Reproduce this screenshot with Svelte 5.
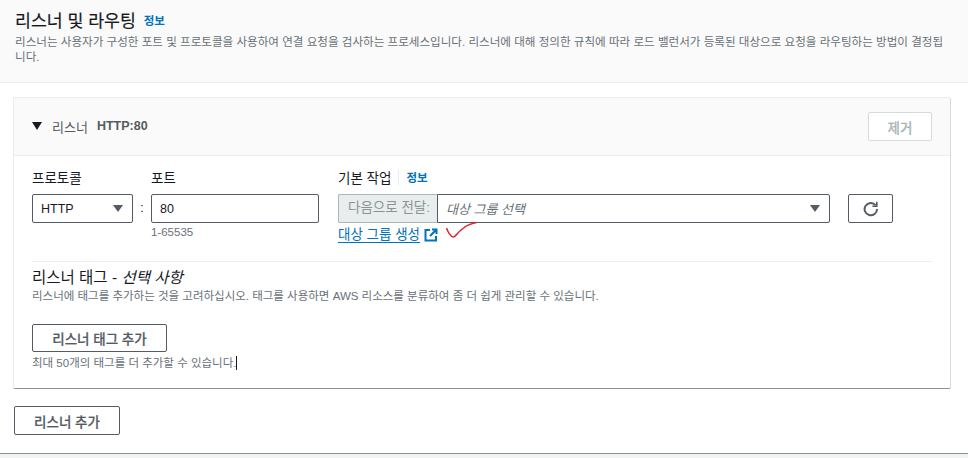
<script>
	const kr = '리스너';
</script>

<div class="page">
	<header class="intro">
		<h2>{kr} 및 라우팅 <a href="#info" class="info">정보</a></h2>
		<p>리스너는 사용자가 구성한 포트 및 프로토콜을 사용하여 연결 요청을 검사하는 프로세스입니다. 리스너에 대해 정의한 규칙에 따라 로드 밸런서가 등록된 대상으로 요청을 라우팅하는 방법이 결정됩니다.</p>
	</header>

	<section class="card">
		<div class="card-head">
			<div class="card-title">
				<span class="caret"></span>
				<span class="name">{kr}</span>
				<strong>HTTP:80</strong>
			</div>
			<button class="btn remove" disabled>제거</button>
		</div>

		<div class="card-body">
			<div class="form-row">
				<div class="field protocol">
					<span class="label">프로토콜</span>
					<div class="control select">HTTP<span class="arrow"></span></div>
				</div>
				<span class="colon">:</span>
				<div class="field port">
					<span class="label">포트</span>
					<div class="control">80</div>
					<span class="hint">1-65535</span>
				</div>
				<div class="field action">
					<span class="label">기본 작업<span class="sep"></span><a href="#info" class="info">정보</a></span>
					<div class="joined">
						<span class="addon">다음으로 전달:</span>
						<div class="control select target"><em>대상 그룹 선택</em><span class="arrow"></span></div>
					</div>
					<div class="link-row">
						<a href="#create" class="create">대상 그룹 생성</a>
						<svg class="ext" width="14" height="14" viewBox="0 0 14 14" fill="none" stroke="#0073bb" stroke-width="2">
							<path d="M6 2H1.5v10.5H12V8" />
							<path d="M8 1.5h4.5V6M12.500 1.500 6 8" />
						</svg>
						<svg class="check" width="32" height="16" viewBox="0 0 32 16" fill="none" stroke="#e0202a" stroke-width="1.5">
							<path d="M0.5 6c1 3 4 9 7 9 1.500 0 4-4 7-6.500 2-2 3-2 5-4 3-2 6-3 11-4" />
						</svg>
					</div>
				</div>
				<button class="btn refresh" aria-label="새로 고침">
					<svg width="16" height="16" viewBox="0 0 16 16" fill="none" stroke="#545b64" stroke-width="2">
						<path d="M12.6 4.2A6.2 6.2 0 1 0 14 8" />
						<path d="M13.8 .8v4.400H9.400" stroke-width="1.6" />
					</svg>
				</button>
			</div>

			<div class="tags">
				<h3>{kr} 태그 - <em>선택 사항</em></h3>
				<p>리스너에 태그를 추가하는 것을 고려하십시오. 태그를 사용하면 AWS 리소스를 분류하여 좀 더 쉽게 관리할 수 있습니다.</p>
				<button class="btn add-tag">{kr} 태그 추가</button>
				<span class="hint limit">최대 50개의 태그를 더 추가할 수 있습니다.<span class="cursor"></span></span>
			</div>
		</div>
	</section>

	<button class="btn add-listener">{kr} 추가</button>
	<div class="foot"></div>
</div>

<style>
	:global(body) {
		margin: 0;
		background: #fff;
	}

	.page {
		width: 968px;
		height: 458px;
		overflow: hidden;
		font-family: "Liberation Sans", "Noto Sans CJK KR", sans-serif;
		color: #16191f;
	}

	.intro {
		height: 82px;
		padding: 0 15px;
		background: #fafafa;
		border-bottom: 1px solid #eaeded;
		overflow: hidden;
	}

	h2 {
		margin: 10px 0 2px;
		font-size: 17.3px;
		line-height: 23px;
		font-weight: 400;
		-webkit-text-stroke: 0.2px #16191f;
	}

	.info {
		margin-left: 3px;
		font-size: 11.5px;
		font-weight: 700;
		color: #0073bb;
		text-decoration: none;
		-webkit-text-stroke: 0;
		vertical-align: 2px;
	}

	.intro p {
		margin: 0;
		width: 934px;
		font-size: 11.57px;
		line-height: 14.5px;
		color: #687078;
	}

	.card {
		margin: 14px 17px 0 13px;
		height: 292px;
		box-sizing: border-box;
		border: 1px solid #eaeded;
		border-right-color: #d5dbdb;
		border-bottom: 1px solid #879596;
		border-radius: 2px;
	}

	.card-head {
		height: 58px;
		box-sizing: border-box;
		padding: 14px 18px 0 18px;
		display: flex;
		justify-content: space-between;
		background: #fafafa;
		border-bottom: 1px solid #eaeded;
	}

	.card-title {
		display: flex;
		align-items: center;
		height: 28px;
		font-size: 13px;
		color: #545b64;
	}

	.card-title strong {
		font-size: 12.5px;
	}

	.caret {
		width: 0;
		height: 0;
		border-left: 5px solid transparent;
		border-right: 5px solid transparent;
		border-top: 8px solid #16191f;
		margin-right: 10px;
	}

	.name {
		margin-right: 9px;
	}

	.btn {
		font-family: inherit;
		background: #fff;
		border: 1px solid #545b64;
		border-radius: 2px;
		color: #545b64;
		font-size: 13.5px;
		font-weight: 500;
		-webkit-text-stroke: 0.2px currentColor;
		padding: 0;
		box-sizing: border-box;
	}

	.remove {
		width: 64px;
		height: 29px;
		color: #aab7b8;
		border-color: #d5dbdb;
	}

	.card-body {
		padding: 13px 18px 0;
	}

	.form-row {
		display: flex;
		align-items: flex-start;
		height: 92px;
	}

	.field {
		display: flex;
		flex-direction: column;
	}

	.label {
		display: flex;
		align-items: center;
		height: 16px;
		margin-bottom: 9px;
		font-size: 13.5px;
	}

	.control {
		position: relative;
		height: 29px;
		box-sizing: border-box;
		border: 1px solid #545b64;
		border-radius: 2px;
		padding-left: 8px;
		display: flex;
		align-items: center;
		font-size: 12.5px;
		background: #fff;
	}

	.arrow {
		position: absolute;
		right: 9px;
		top: 10px;
		border-left: 5px solid transparent;
		border-right: 5px solid transparent;
		border-top: 7px solid #545b64;
	}

	.protocol {
		width: 101px;
	}

	.colon {
		width: 18px;
		margin-top: 29px;
		text-align: center;
		font-size: 12.5px;
		line-height: 20px;
	}

	.port {
		width: 168px;
	}

	.hint {
		margin-top: 2px;
		font-size: 11.5px;
		line-height: 14px;
		color: #687078;
	}

	.action {
		width: 492px;
		margin-left: 19px;
	}

	.sep {
		width: 1px;
		height: 16px;
		margin: 0 7px;
		background: #eaeded;
	}

	.action .info {
		margin: 0;
		vertical-align: 0;
	}

	.joined {
		display: flex;
	}

	.addon {
		width: 99px;
		height: 29px;
		box-sizing: border-box;
		padding-right: 7px;
		background: #eaeded;
		border: 1px solid #aab7b8;
		border-right: 0;
		border-radius: 2px 0 0 2px;
		font-size: 13.5px;
		line-height: 25px;
		text-align: right;
		color: #879596;
	}

	.target {
		flex: 1;
		border-radius: 0 2px 2px 0;
		font-size: 13px;
	}

	.target em {
		color: #687078;
	}

	.link-row {
		position: relative;
		display: flex;
		align-items: center;
		margin-top: 2px;
		height: 16px;
	}

	.create {
		font-size: 13.5px;
		color: #0073bb;
		text-decoration: underline;
		text-underline-offset: 3px;
	}

	.ext {
		margin: 3px 0 0 4px;
	}

	.check {
		position: absolute;
		left: 108px;
		top: -3px;
	}

	.refresh {
		width: 45px;
		height: 29px;
		margin-top: 25px;
		margin-left: 18px;
		display: flex;
		align-items: center;
		justify-content: center;
	}

	.tags {
		border-top: 1px solid #eaeded;
		width: 900px;
		display: flex;
		flex-direction: column;
		align-items: flex-start;
	}

	h3 {
		margin: 6px 0 0;
		font-size: 15.5px;
		line-height: 20px;
		font-weight: 400;
	}

	.tags p {
		margin: 0;
		font-size: 11.5px;
		line-height: 16px;
		color: #687078;
	}

	.add-tag {
		width: 135px;
		height: 28px;
		margin-top: 20px;
	}

	.limit {
		margin-top: 4px;
		display: flex;
		align-items: center;
	}

	.cursor {
		width: 1px;
		height: 14px;
		background: #16191f;
	}

	.add-listener {
		display: block;
		width: 106px;
		height: 29px;
		margin: 17px 0 0 14px;
	}

	.foot {
		margin-top: 18px;
		height: 10px;
		border-top: 1px solid #879596;
		background: #f2f3f3;
	}
</style>
